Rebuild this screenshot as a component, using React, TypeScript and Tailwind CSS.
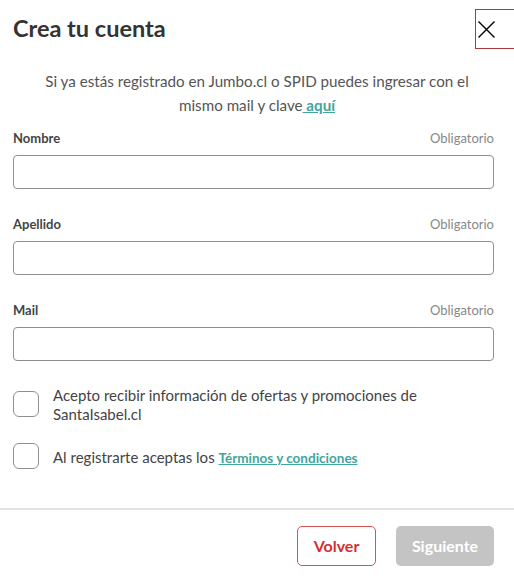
const fields = ['Nombre', 'Apellido', 'Mail']

export default function App() {
  return (
    <div className="w-[514px] h-[588px] bg-white overflow-hidden flex flex-col font-['Lato',sans-serif] text-[#444]">
      <div className="flex items-center pt-[9px] pl-[13px]">
        <h1 className="text-[23.5px] font-bold text-[#333]">Crea tu cuenta</h1>
        <button className="ml-auto w-[46px] h-[40px] -mr-[7px] border border-[#a83a3a] flex items-center pl-[2px]">
          <svg width="17" height="17" viewBox="0 0 17 17" className="text-black">
            <path d="M0.5 0.5 L16.5 16.5 M16.5 0.5 L0.5 16.5" stroke="currentColor" strokeWidth="1.4" />
          </svg>
        </button>
      </div>

      <p className="mt-[20px] text-center text-[15.2px] leading-[24px] text-[#555]">
        Si ya estás registrado en Jumbo.cl o SPID puedes ingresar con el
        <br />
        mismo mail y clave
        <a className="font-bold text-[#3fa69b] underline"> aquí</a>
      </p>

      <div className="pl-[13px] pr-[20px] mt-[14px] flex flex-col gap-[28px]">
        {fields.map((f) => (
          <div key={f} className="flex flex-col gap-[8px]">
            <div className="flex justify-between items-center h-[16px] text-[13px]">
              <span className="font-bold text-[#444]">{f}</span>
              <span className="text-[#888]">Obligatorio</span>
            </div>
            <input className="h-[34px] w-full border border-[#8f8f8f] rounded-[4px]" />
          </div>
        ))}
      </div>

      <div className="px-[13px] mt-[25px] flex flex-col gap-[19px]">
        <label className="flex items-start gap-[14px]">
          <span className="mt-[5px] w-[26px] h-[26px] shrink-0 border border-[#8f8f8f] rounded-[6px]" />
          <span className="text-[15px] leading-[19px] text-[#444]">
            Acepto recibir información de ofertas y promociones de
            <br />
            SantaIsabel.cl
          </span>
        </label>
        <label className="flex items-center gap-[14px]">
          <span className="w-[26px] h-[26px] shrink-0 border border-[#8f8f8f] rounded-[6px]" />
          <span className="text-[15px] leading-[19px] text-[#444] mt-[3px]">
            Al registrarte aceptas los{' '}
            <a className="text-[13.5px] font-bold text-[#3fa69b] underline">Términos y condiciones</a>
          </span>
        </label>
      </div>

      <div className="mt-auto border-t-2 border-[#e3e3e3] flex justify-end gap-[20px] px-[20px] pt-[16px] pb-[22px]">
        <button className="h-[40px] w-[79px] border border-[#d9534f] rounded-[5px] text-[16px] font-bold text-[#d32f2f]">
          Volver
        </button>
        <button className="h-[40px] w-[98px] bg-[#c4c4c4] rounded-[5px] text-[16px] font-bold text-white">
          Siguiente
        </button>
      </div>
    </div>
  )
}
